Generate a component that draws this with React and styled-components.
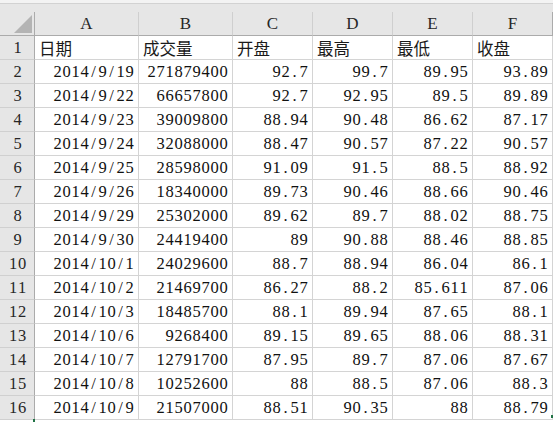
import React from "react";
import styled, { createGlobalStyle } from "styled-components";

const Global = createGlobalStyle`
  html, body { margin: 0; padding: 0; background: #ffffff; }
  body { width: 553px; height: 422px; overflow: hidden; }
`;

const Page = styled.div`
  width: 553px;
  height: 422px;
  overflow: hidden;
  position: relative;
  background: #ffffff;
`;

const TopStrip = styled.div`
  height: 3px;
  background: #f3f3f3;
  border-bottom: 1px solid #d2d2d2;
`;

const TopGap = styled.div`
  height: 8px;
  background: #e6e6e6;
`;

const Sheet = styled.div`
  display: grid;
  grid-template-columns: 35px 104px 94px 80px 80px 80px 80px;
  grid-auto-rows: 24px;
  font-family: "Liberation Serif", "Noto Sans CJK SC", serif;
  font-size: 16.5px;
  color: #111;
`;

const Corner = styled.div`
  box-sizing: border-box;
  background: #e6e6e6;
  border-right: 1px solid #ababab;
  border-bottom: 1px solid #ababab;
  display: flex;
  align-items: flex-end;
  justify-content: flex-end;
  padding: 0 2px 2px 0;
`;

const ColHead = styled.div`
  box-sizing: border-box;
  background: #e6e6e6;
  border-right: 1px solid ${(p) => (p.$last ? "#ababab" : "#cfcfcf")};
  border-bottom: 1px solid #ababab;
  display: flex;
  align-items: center;
  justify-content: center;
  color: #262626;
  font-size: 17px;
`;

const RowHead = styled.div`
  box-sizing: border-box;
  background: #e6e6e6;
  border-right: 1px solid #ababab;
  border-bottom: 1px solid #d0d0d0;
  display: flex;
  align-items: center;
  justify-content: center;
  color: #262626;
  padding-left: 1px;
`;

const Cell = styled.div`
  box-sizing: border-box;
  border-right: 1px solid #d4d4d4;
  border-bottom: 1px solid #d4d4d4;
  display: flex;
  align-items: center;
  justify-content: ${(p) => (p.$cjk ? "flex-start" : "flex-end")};
  padding: ${(p) => (p.$cjk ? "0 0 0 4px" : "0 4px 0 0")};
  font-family: ${(p) =>
    p.$cjk ? '"Noto Sans CJK SC", sans-serif' : '"Liberation Serif", serif'};
  font-size: ${(p) => (p.$cjk ? "16.5px" : "16.5px")};
  color: ${(p) => (p.$cjk ? "#1a1a1a" : "#111")};
  white-space: nowrap;
  overflow: hidden;
`;

const Glyph = styled.span`
  display: inline-block;
  width: 9px;
  text-align: center;
`;

const Mono = ({ text }) =>
  text.split("").map((ch, i) => <Glyph key={i}>{ch}</Glyph>);

const Handle = styled.div`
  position: absolute;
  width: 2px;
  height: 3px;
  background: #217346;
  left: ${(p) => p.$x}px;
  top: ${(p) => p.$y}px;
`;

const cols = ["A", "B", "C", "D", "E", "F"];
const header = ["日期", "成交量", "开盘", "最高", "最低", "收盘"];
const rows = [
  ["2014/9/19", "271879400", "92.7", "99.7", "89.95", "93.89"],
  ["2014/9/22", "66657800", "92.7", "92.95", "89.5", "89.89"],
  ["2014/9/23", "39009800", "88.94", "90.48", "86.62", "87.17"],
  ["2014/9/24", "32088000", "88.47", "90.57", "87.22", "90.57"],
  ["2014/9/25", "28598000", "91.09", "91.5", "88.5", "88.92"],
  ["2014/9/26", "18340000", "89.73", "90.46", "88.66", "90.46"],
  ["2014/9/29", "25302000", "89.62", "89.7", "88.02", "88.75"],
  ["2014/9/30", "24419400", "89", "90.88", "88.46", "88.85"],
  ["2014/10/1", "24029600", "88.7", "88.94", "86.04", "86.1"],
  ["2014/10/2", "21469700", "86.27", "88.2", "85.611", "87.06"],
  ["2014/10/3", "18485700", "88.1", "89.94", "87.65", "88.1"],
  ["2014/10/6", "9268400", "89.15", "89.65", "88.06", "88.31"],
  ["2014/10/7", "12791700", "87.95", "89.7", "87.06", "87.67"],
  ["2014/10/8", "10252600", "88", "88.5", "87.06", "88.3"],
  ["2014/10/9", "21507000", "88.51", "90.35", "88", "88.79"],
];

export default function App() {
  return (
    <Page>
      <Global />
      <TopStrip />
      <TopGap />
      <Sheet>
        <Corner>
          <svg width="18" height="18" viewBox="0 0 18 18">
            <polygon points="18,0 18,18 0,18" fill="#b4b4b4" />
          </svg>
        </Corner>
        {cols.map((c, i) => (
          <ColHead key={c} $last={i === cols.length - 1}>
            {c}
          </ColHead>
        ))}
        <RowHead>
          <Mono text="1" />
        </RowHead>
        {header.map((h) => (
          <Cell key={h} $cjk>
            {h}
          </Cell>
        ))}
        {rows.map((r, ri) => (
          <React.Fragment key={ri}>
            <RowHead>
              <Mono text={String(ri + 2)} />
            </RowHead>
            {r.map((v, ci) => (
              <Cell key={ci}>
                <Mono text={v} />
              </Cell>
            ))}
          </React.Fragment>
        ))}
      </Sheet>
      <Handle $x={33} $y={419} />
      <Handle $x={551} $y={415} />
    </Page>
  );
}
